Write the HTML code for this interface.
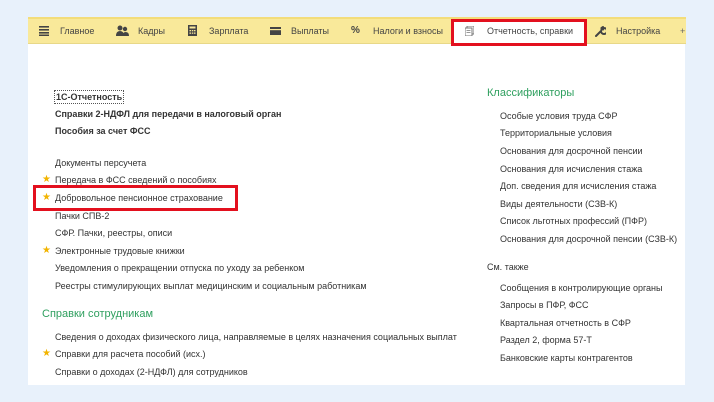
<!DOCTYPE html>
<html><head><meta charset="utf-8"><style>
*{margin:0;padding:0;box-sizing:border-box}
body{width:714px;height:402px;background:#e8f1fb;font-family:"Liberation Sans",Arial,sans-serif;font-size:9px;color:#333;position:relative;overflow:hidden}
.panel{position:absolute;left:28px;top:17px;width:657px;height:368px;background:#fff}
.tb{position:absolute;left:28px;top:17px;width:658px;height:27px;background:#f9e99a;border-top:2px solid #f3dd7a;border-bottom:1px solid #e8d888}
.t{position:absolute;top:26px;font-size:9px;color:#444}
.ic{position:absolute;top:25px}
.a{position:absolute;white-space:nowrap}
.g{color:#2e9f5e;font-size:11px}
.b{font-weight:bold}
.star{position:absolute;color:#f2b400;font-size:10px}
.red{position:absolute;border:3px solid #e3101e}
</style></head><body>
<div class="panel"></div>
<div class="tb"></div>
<svg class="ic" style="left:39px;top:26px" width="10" height="10"><rect y="0" width="10" height="1.6" fill="#444"/><rect y="3" width="10" height="1.6" fill="#444"/><rect y="6" width="10" height="1.6" fill="#444"/><rect y="8.5" width="10" height="1.5" fill="#444"/></svg>
<div class="t" style="left:60px">Главное</div>
<svg class="ic" style="left:116px" width="13" height="11"><circle cx="4" cy="3" r="2.5" fill="#444"/><path d="M0 11 Q0 6 4 6 Q8 6 8 11Z" fill="#444"/><circle cx="9" cy="4" r="2.2" fill="#444"/><path d="M6 11 Q7 7 9.5 7 Q13 7 13 11Z" fill="#444"/></svg>
<div class="t" style="left:138px">Кадры</div>
<svg class="ic" style="left:188px" width="9" height="11"><rect width="9" height="11" fill="#444"/><rect x="1.5" y="1.5" width="6" height="2" fill="#f9e99a"/><g fill="#f9e99a"><rect x="1.5" y="5" width="1.5" height="1.3"/><rect x="3.8" y="5" width="1.5" height="1.3"/><rect x="6" y="5" width="1.5" height="1.3"/><rect x="1.5" y="7.5" width="1.5" height="1.3"/><rect x="3.8" y="7.5" width="1.5" height="1.3"/><rect x="6" y="7.5" width="1.5" height="1.3"/></g></svg>
<div class="t" style="left:209px">Зарплата</div>
<svg class="ic" style="left:270px;top:27px" width="11" height="8"><rect width="11" height="8" fill="#444"/><rect y="2" width="11" height="1.2" fill="#f9e99a"/></svg>
<div class="t" style="left:291px">Выплаты</div>
<div class="t" style="left:351px;font-weight:bold;color:#444;font-size:10px;top:25px">%</div>
<div class="t" style="left:373px">Налоги и взносы</div>
<div class="a" style="left:451px;top:19px;width:136px;height:27px;background:#fff"></div>
<svg class="ic" style="left:465px;top:26px" width="9" height="10"><rect x="2" y="0" width="7" height="8" fill="none" stroke="#777" stroke-width="1"/><rect x="0" y="2" width="7" height="8" fill="#fff" stroke="#777" stroke-width="1"/><path d="M1.5 4.5h4M1.5 6.5h4" stroke="#777" stroke-width="0.8"/></svg>
<div class="t" style="left:487px">Отчетность, справки</div>
<div class="red" style="left:451px;top:19px;width:136px;height:27px"></div>
<svg class="ic" style="left:595px;top:26px" width="11" height="11"><path d="M1 10 L6 5 M6 5 A3 3 0 1 0 9 2 L8 3.5 L6.5 3.5 L6.5 2 L8 1" stroke="#444" stroke-width="2" fill="none" stroke-linecap="round"/></svg>
<div class="t" style="left:616px">Настройка</div>
<div class="t" style="left:680px;color:#666">+</div>

<div class="a b" style="left:54px;top:90px;border:1px dotted #555;padding:0 1px;line-height:12px">1С-Отчетность</div>
<div class="a b" style="left:55px;top:109px">Справки 2-НДФЛ для передачи в налоговый орган</div>
<div class="a b" style="left:55px;top:126px">Пособия за счет ФСС</div>
<div class="a" style="left:55px;top:158px">Документы персучета</div>
<div class="star" style="left:42px;top:174px">★</div>
<div class="a" style="left:55px;top:175px">Передача в ФСС сведений о пособиях</div>
<div class="star" style="left:42px;top:192px">★</div>
<div class="a" style="left:55px;top:193px">Добровольное пенсионное страхование</div>
<div class="red" style="left:33px;top:185px;width:205px;height:26px"></div>
<div class="a" style="left:55px;top:211px">Пачки СПВ-2</div>
<div class="a" style="left:55px;top:228px">СФР. Пачки, реестры, описи</div>
<div class="star" style="left:42px;top:245px">★</div>
<div class="a" style="left:55px;top:246px">Электронные трудовые книжки</div>
<div class="a" style="left:55px;top:263px">Уведомления о прекращении отпуска по уходу за ребенком</div>
<div class="a" style="left:55px;top:281px">Реестры стимулирующих выплат медицинским и социальным работникам</div>
<div class="a g" style="left:42px;top:308px">Справки сотрудникам</div>
<div class="a" style="left:55px;top:332px">Сведения о доходах физического лица, направляемые в целях назначения социальных выплат</div>
<div class="star" style="left:42px;top:348px">★</div>
<div class="a" style="left:55px;top:349px">Справки для расчета пособий (исх.)</div>
<div class="a" style="left:55px;top:367px">Справки о доходах (2-НДФЛ) для сотрудников</div>

<div class="a g" style="left:487px;top:87px">Классификаторы</div>
<div class="a" style="left:500px;top:111px">Особые условия труда СФР</div>
<div class="a" style="left:500px;top:128px">Территориальные условия</div>
<div class="a" style="left:500px;top:146px">Основания для досрочной пенсии</div>
<div class="a" style="left:500px;top:164px">Основания для исчисления стажа</div>
<div class="a" style="left:500px;top:181px">Доп. сведения для исчисления стажа</div>
<div class="a" style="left:500px;top:199px">Виды деятельности (СЗВ-К)</div>
<div class="a" style="left:500px;top:216px">Список льготных профессий (ПФР)</div>
<div class="a" style="left:500px;top:234px">Основания для досрочной пенсии (СЗВ-К)</div>
<div class="a" style="left:487px;top:262px">См. также</div>
<div class="a" style="left:500px;top:283px">Сообщения в контролирующие органы</div>
<div class="a" style="left:500px;top:300px">Запросы в ПФР, ФСС</div>
<div class="a" style="left:500px;top:318px">Квартальная отчетность в СФР</div>
<div class="a" style="left:500px;top:335px">Раздел 2, форма 57-Т</div>
<div class="a" style="left:500px;top:353px">Банковские карты контрагентов</div>
</body></html>
